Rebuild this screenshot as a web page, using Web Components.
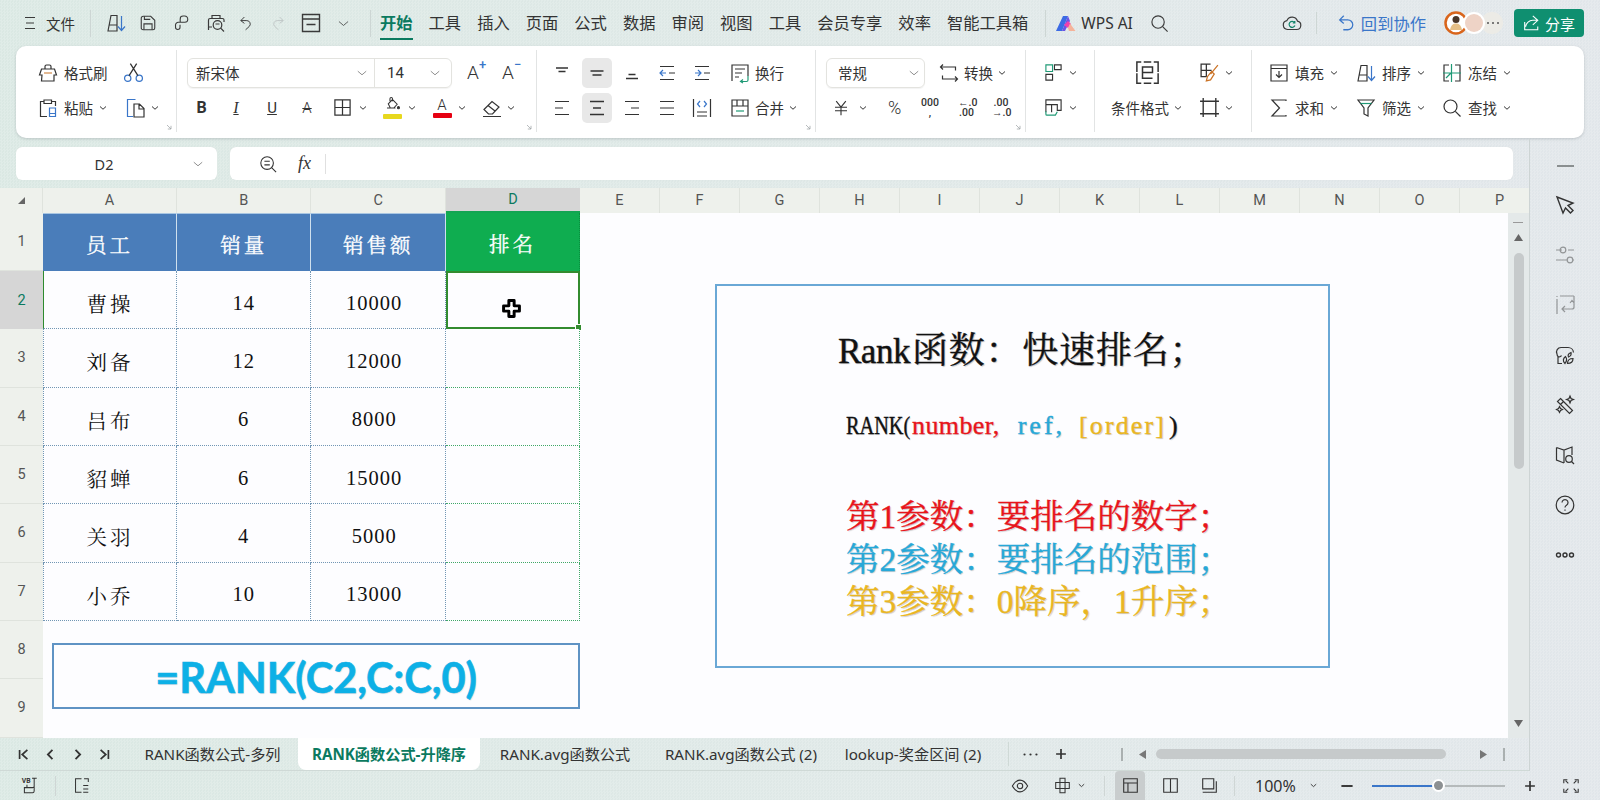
<!DOCTYPE html>
<html lang="zh">
<head>
<meta charset="utf-8">
<title>RANK</title>
<style>
html, body { margin: 0; padding: 0; width: 1600px; height: 800px; overflow: hidden; }
body {
    display: flex;
    flex-direction: column;
    font-family: "Noto Sans", "Noto Sans CJK SC", sans-serif;
    color: #333;
    background:
        repeating-conic-gradient(rgba(255,255,255,.16) 0 25%, transparent 0 50%) 0 0 / 3px 3px,
        linear-gradient(90deg, #dae8e3, #dfe8e7 55%, #e1e6ea);
}
.below { display: flex; height: 633px; flex: none; }
.left-col { width: 1529px; display: flex; flex-direction: column; }
</style>
</head>
<body>
<wps-topbar></wps-topbar>
<wps-ribbon></wps-ribbon>
<div class="below">
    <div class="left-col">
        <wps-formula></wps-formula>
        <wps-sheet></wps-sheet>
        <wps-tabs></wps-tabs>
    </div>
    <wps-rail></wps-rail>
</div>
<wps-status></wps-status>

<script>
// icon shapes, all on a 20x20 box, stroke comes from currentColor
const BLUE = '#3a76c9';
const GREEN = '#1f9a76';
const ICONS = {
    menu: '<path d="M5 4.5h10M6 10h8M5 15.5h10"/>',
    chev: '<path d="M4 7l6 5.5L16 7" stroke-width="2"/>',
    chevthin: '<path d="M3 7l7 6 7-6" stroke-width="1.2"/>',
    sort: `<path d="M2 18 5 2.5h6V18zM3.5 12H11"/><path d="M15.5 3v14M12 13.5l3.5 4 3.5-4" stroke="${BLUE}"/>`,
    save: '<path d="M2.5 4.5a2 2 0 0 1 2-2h8.5l4.5 4.5v8.5a2 2 0 0 1-2 2h-11a2 2 0 0 1-2-2z"/><path d="M6 2.5V6h6.5M5.5 17.5V11h9v6.5"/>',
    paint: '<path d="M8 9V5.5a3.2 3.2 0 0 1 3.2-3.2H13a3.4 3.4 0 0 1 0 6.8H6a3.2 3.2 0 0 0-3.2 3.2v2.5a2.5 2.5 0 0 0 5 0V12"/>',
    preview: '<path d="M6 5.5V2.5h8v3M2.5 17V7a1.5 1.5 0 0 1 1.5-1.5h12.5A1.5 1.5 0 0 1 18 7v2M2.5 14H6"/><circle cx="11.5" cy="12" r="4.3"/><path d="M14.7 15.2l3.3 3.3M9.5 11h4"/>',
    undo: '<path d="M8 2.5 3.5 7l4.5 3.5M3.5 7H11a4.3 4.3 0 0 1 3 7.4L9.5 18.5"/>',
    redo: '<path d="M12 2.5 16.5 7 12 10.5M16.5 7H9a4.3 4.3 0 0 0-3 7.4l4.5 4.1"/>',
    box: '<path d="M1.5 1.5h17v17h-17zM1.5 6h17M5.5 11.5h9" stroke-width="1.4"/>',
    search: '<circle cx="8.5" cy="8.5" r="6.5"/><path d="M13.3 13.3 18.5 18.5"/>',
    cloud: '<path d="M5.5 16.5a4.5 4.5 0 0 1-.6-8.9 5.6 5.6 0 0 1 10.6.6 4.2 4.2 0 0 1-.8 8.3z"/><path d="M12.5 9.5a3 3 0 1 0 .4 3M12.8 8v2h-2" stroke="#12846a"/>',
    backblue: `<path d="M7.5 2 3 6.5 7.5 10.5M3 6.5h9a5.5 5.5 0 0 1 0 11H7" stroke="${BLUE}" stroke-width="1.4"/>`,
    share: '<path d="M12 2l5.5 5-5.5 5M17 7h-5a8 8 0 0 0-8 7M3 9v8.5h14.5V14" stroke-width="1.2"/>',
    scissors: `<circle cx="4.5" cy="15.5" r="3" stroke="${BLUE}"/><circle cx="15.5" cy="15.5" r="3" stroke="${BLUE}"/><path d="M5.8 13 13 1.5M14.2 13 7 1.5"/>`,
    painter: '<path d="M7 6V3.5A1.5 1.5 0 0 1 8.5 2h3A1.5 1.5 0 0 1 13 3.5V6M3.5 6h13l2 6H16v6H3.5l.5-6H1.5z"/><path d="M6 10h8" stroke="#d08a4a"/>',
    paste: `<path d="M5.5 3.5h-3v15H9M14 3.5h3.5V8M6 3.5V2h7.5v3.5H6z"/><path d="M11.5 10h6v8.5h-6zM11.5 15.5h6" stroke="${BLUE}"/>`,
    copy: `<path d="M8 18.5H2.5V1.5h8" stroke="${BLUE}"/><path d="M9 6h5.5L19 10.5V19H9zM14 6v5h5"/>`,
    borders: '<path d="M2 2h16v16H2zM10 2v16M2 10h16" stroke-width="1.3"/>',
    fill: '<path d="M5 8 10 3l5.5 5.5-4 4.5H7.5zM3.5 13h10M7 5V2a1.5 1.5 0 0 1 3 0v3"/><circle cx="17" cy="12.5" r="1.2" fill="currentColor"/>',
    eraser: '<path d="M2 11.5 10 3.5l7 5.5-6.5 7h-4zM6 7.5l7 5.5M1 18.5h18"/>',
    alTop: '<path d="M4 5h12M6.5 8.5h7" stroke-width="1.4"/>',
    alMid: '<path d="M3.5 8h13M5.5 12h9" stroke-width="1.6"/>',
    alBot: '<path d="M6.5 11.5h7M4 15.5h12" stroke-width="1.4"/>',
    indL: `<path d="M3 3.5h14M3 16.5h14M12 10h6"/><path d="M3 10h6M6 7l-3 3 3 3" stroke="${BLUE}"/>`,
    indR: `<path d="M3 3.5h14M3 16.5h14M12 10h6"/><path d="M3 10h6M6 7l3 3-3 3" stroke="${BLUE}"/>`,
    wrap: `<path d="M2 18V2h16v11M5 6h10M5 10h7M5 14h4"/><path d="M18 13v4a1.5 1.5 0 0 1-1.5 1.5H11M13 16.5l-2.5 2 2.5 1.5" stroke="${GREEN}"/>`,
    left: '<path d="M3 3.5h14M3 10h8M3 16.5h14"/>',
    center: '<path d="M3 3.5h14M6 10h8M3 16.5h14" stroke-width="1.5"/>',
    right: '<path d="M3 3.5h14M9 10h8M3 16.5h14"/>',
    just: '<path d="M3 3.5h14M3 10h14M3 16.5h14"/>',
    dist: `<path d="M1.5 1v18M18.5 1v18M5 14h10M5 18h10"/><path d="M8 3 5.5 6 8 9M12 3l2.5 3L12 9" stroke="${BLUE}"/>`,
    merge: `<path d="M2 2h16v16H2zM7 2v6M13 2v6M2 8h16"/><path d="M6 13h8" stroke="${GREEN}"/>`,
    convert: '<path d="M4 1.5l-2.5 2.5L4 6.5M2 4h14.5v3.5M16 18.5l2.5-2.5-2.5-2.5M18 16H3.5v-3.5"/>',
    yen: '<path d="M4 1.5 10 9l6-7.5M2.5 9h15M2.5 13.5h15M10 9v10" stroke-width="1.4"/>',
    table1: `<path d="M2 12h7v6H2zM11 2h7v5h-7z"/><path d="M2 2h7v7H2z" stroke="${GREEN}"/>`,
    table2: `<path d="M2 2h16v11h-4V7H2zM2 7v8M8 7v8"/><path d="M2 14v3a1 1 0 0 0 1 1h9l2-3.5" stroke="${GREEN}"/>`,
    cond: '<path d="M5 1.5H1.5v8M1.5 10.5v8H5M15 1.5h3.5v8M18.5 10.5v8H15M7 1.5h6M7 18.5h6M6 5.5h8V10H6zM6 10v4.5h8"/>',
    cbrush: '<path d="M11 2H2v12h5M2 8h10M7 2v12"/><path d="M18 3 11 11.5M12 9l2.5 2.5L11 17l-4 1 1-4z" stroke="#cb7428"/>',
    crop: '<path d="M4 1v18M16 1v18M1 4h18M1 16h18" stroke-width="1.3"/>',
    fillb: '<path d="M2 2h16v16H2zM2 5.5h16"/><path d="M10 8v6.5M7 11.5l3 3 3-3"/>',
    freeze: `<path d="M7 2H2v16h5M13 2h5v16h-5"/><path d="M9.5 1v18M1 10h18M4 15l5-5" stroke="${GREEN}"/>`,
    sum: '<path d="M17 3V2H3l7.5 8L3 18h14v-1"/>',
    filter: `<path d="M2 2h16l-6 8v8l-4-2v-6z"/><path d="M4.5 5.5h11" stroke="${GREEN}"/>`,
    eye: '<path d="M1.5 10C4 5.5 7 3.5 10 3.5s6 2 8.5 6.5c-2.5 4.5-5.5 6.5-8.5 6.5S4 14.5 1.5 10z"/><circle cx="10" cy="10" r="3"/>',
    layout: '<path d="M7 6.5V1.5h6v5M7 13.5v5h6v-5M7 6.5H2v7h5M13 6.5h5v7h-5M7 6.5h6v7H7z"/>',
    normal: '<path d="M2 2h16v16H2zM2 7h16M7 7v11" stroke-width="1.3"/>',
    page: '<path d="M2 2h16v16H2zM10 2v16" stroke-width="1.3"/>',
    pagebrk: '<path d="M2 2h13v12H2zM18 5v13H2" stroke-width="1.3"/>',
    full: '<path d="M2 7V3h4M18 7V3h-4M2 13v4h4M18 13v4h-4M7 7 4 4M13 7l3-3M7 13l-3 3M13 13l3 3"/>',
    zoomf: '<circle cx="9" cy="9" r="7"/><path d="M14 14l5 5M6 7h6M6 11h6"/>',
    vba: '<path d="M13 1.5h5.5M15.5 1.5v9a2 2 0 0 1-2 2H7V9M7 12.5H4v6h9.5a2 2 0 0 0 2-2v-6"/><text x="1" y="7.5" font-size="8" font-weight="700" font-family="Roboto,sans-serif" fill="currentColor" stroke="none">VB</text>',
    side: '<path d="M10 2H3v16h7M13 2h5v4M12 10h6M12 14h6M12 18h6"/>',
    arrow: '<path d="M2 2 18 8l-5 2.5 5 5-2.5 2.5-5-5L8 18z" stroke-width="1.4"/>',
    sliders: '<path d="M1 5h6M13 5h6M1 15h11M18 15h1"/><circle cx="8" cy="5" r="2.8"/><circle cx="15" cy="15" r="2.8"/>',
    move: '<path d="M2 1v1M2 4v15M5 1h14M19 1v11a2 2 0 0 1-2 2H7M10 11l-3 3 3 3M15 8l2-2.5L19 8"/>',
    pic: '<path d="M7 18.5H3V11.5a3.5 3.5 0 0 1-1-2.5A4.5 4.5 0 0 1 6 2.5h7a5.5 5.5 0 0 1 5.5 5M3 11.5a2.5 2.5 0 0 0 3.5-1"/><path d="M10 18.5c-2.5-2.5-2-5 .5-7 1.5 2 1.5 4.5-.5 7zM12.5 18.5c0-3 2-5 5.5-5 0 3-2 5-5.5 5zM13.5 12c-1-2 0-3.5 2.5-4.5.5 2 0 3.5-2.5 4.5z"/>',
    wand: '<path d="M5.5 3.5 17.5 15.5 14.5 18.5 2.5 6.5zM8.5 6.5l-3 3"/><path d="M15 1l1 2.5L18.5 4.5 16 5.5 15 8l-1-2.5L11.5 4.5 14 3.5zM4.5 11.5l1 2 2 1-2 1-1 2-1-2-2-1 2-1z"/>',
    mapq: '<path d="M1.5 2.5 9 5l8-3v8M9 5v13M9 18l-7.5-3V2.5"/><circle cx="14" cy="14" r="3.3"/><path d="M16.5 16.5 19 19"/>',
    help: '<circle cx="10" cy="10" r="8.8"/><path d="M7 7.5a3 3 0 1 1 4.5 2.7c-1 .6-1.5 1-1.5 2.3M10 14.5v1.2"/>',
    more: '<circle cx="3.5" cy="10" r="2"/><circle cx="10" cy="10" r="2"/><circle cx="16.5" cy="10" r="2"/>',
    dots: '<g fill="currentColor" stroke="none"><circle cx="3" cy="10" r="1.3"/><circle cx="10" cy="10" r="1.3"/><circle cx="17" cy="10" r="1.3"/></g>',
    first: '<path d="M4 3v14M16 3 8 10l8 7" stroke-width="2.6"/>',
    prev: '<path d="M13 3 6 10l7 7" stroke-width="2.8"/>',
    next: '<path d="M7 3l7 7-7 7" stroke-width="2.8"/>',
    last: '<path d="M16 3v14M4 3l8 7-8 7" stroke-width="2.6"/>',
    plus: '<path d="M10 3v14M3 10h14" stroke-width="2.4"/>',
    minus: '<path d="M3 10h14" stroke-width="2.4"/>',
    corner: '<path d="M5 5l10 10M15 7v8H7" stroke-width="1.8"/>'
};

class WpsIco extends HTMLElement {
    constructor() {
        super();
        const shadow = this.attachShadow({ mode: 'open' });
        const size = this.getAttribute('size') || 20;
        const sw = this.getAttribute('sw') || 1.2;
        shadow.innerHTML = `
            <style>
                :host { display: inline-flex; flex: none; width: ${size}px; height: ${size}px; }
                svg { width: 100%; height: 100%; display: block; overflow: visible; }
            </style>
            <svg viewBox="0 0 20 20" fill="none" stroke="currentColor" stroke-width="${sw}">${ICONS[this.getAttribute('name')] || ''}</svg>`;
    }
}
customElements.define('wps-ico', WpsIco);

// icon + label + optional small arrow
class WpsBtn extends HTMLElement {
    constructor() {
        super();
        const shadow = this.attachShadow({ mode: 'open' });
        const icon = this.getAttribute('icon');
        const label = this.getAttribute('label');
        shadow.innerHTML = `
            <style>
                :host { display: inline-flex; align-items: center; flex: none; gap: 6px; font-size: 14.5px; color: #333; line-height: 20px; white-space: nowrap; }
                .c { margin-left: -1px; color: #333; }
            </style>
            ${icon ? `<wps-ico name="${icon}"></wps-ico>` : ''}
            ${label ? `<span>${label}</span>` : ''}
            ${this.hasAttribute('chev') ? '<wps-ico class="c" name="chev" size="10"></wps-ico>' : ''}`;
    }
}
customElements.define('wps-btn', WpsBtn);

class WpsTopbar extends HTMLElement {
    constructor() {
        super();
        const shadow = this.attachShadow({ mode: 'open' });
        shadow.innerHTML = `
            <style>
                :host { display: flex; align-items: center; height: 46px; flex: none; font-size: 16.3px; color: #333; white-space: nowrap; }
                .sep { width: 1px; height: 27px; background: #cdd6d4; flex: none; }
                wps-ico { color: #3a3a3a; }
                .nav { display: flex; gap: 16px; margin-left: 9px; }
                .nav span { line-height: 24px; }
                .on { color: #0b7a5f; font-weight: 700; position: relative; }
                .on::after { content: ""; position: absolute; left: 0; right: 0; bottom: -5px; height: 2.5px; background: #0b7a5f; }
                .share { display: flex; align-items: center; gap: 5px; margin: 0 16px 0 auto; width: 70px; height: 28px; box-sizing: border-box; padding-left: 8px; background: #0f8f70; color: #fff; border-radius: 4px; font-size: 15px; flex: none; }
            </style>
            <wps-ico name="menu" size="20" style="margin-left:20px"></wps-ico>
            <span style="margin-left:6px;font-size:14.5px">文件</span>
            <div class="sep" style="margin-left:15px"></div>
            <wps-ico name="sort" style="margin-left:15px"></wps-ico>
            <wps-ico name="save" size="18" style="margin-left:13px"></wps-ico>
            <wps-ico name="paint" size="18" style="margin-left:16px"></wps-ico>
            <wps-ico name="preview" style="margin-left:15px"></wps-ico>
            <wps-ico name="undo" size="16" style="margin-left:12px"></wps-ico>
            <wps-ico name="redo" size="16" style="margin-left:16px;color:#bfc6c5"></wps-ico>
            <wps-ico name="box" size="20" style="margin-left:15px"></wps-ico>
            <wps-ico name="chevthin" size="13" style="margin-left:16px"></wps-ico>
            <div class="sep" style="margin-left:20px"></div>
            <div class="nav">
                <span class="on">开始</span><span>工具</span><span>插入</span><span>页面</span><span>公式</span><span>数据</span><span>审阅</span><span>视图</span><span>工具</span><span>会员专享</span><span>效率</span><span>智能工具箱</span>
            </div>
            <div class="sep" style="margin-left:17px"></div>
            <svg width="20" height="15" viewBox="0 0 20 15" style="margin-left:10px;flex:none">
                <path d="M0 15 7 0h5L6 15z" fill="#3c6be4"/>
                <path d="M6 15 12 0l2 5-5 10z" fill="#6a55e6"/>
                <path d="M8 9l4-4 3 3-3 4z" fill="#f03fae"/>
                <path d="M14 7.5 19.5 15H13l-1-3z" fill="#f5b39a"/>
            </svg>
            <span style="margin-left:5px;font-size:15.5px">WPS AI</span>
            <wps-ico name="search" size="19" style="margin-left:17px"></wps-ico>
            <wps-ico name="cloud" size="20" style="margin-left:113px"></wps-ico>
            <div class="sep" style="margin-left:14px;height:22px"></div>
            <wps-ico name="backblue" size="18" style="margin-left:20px"></wps-ico>
            <span style="margin-left:6px;color:#3a76c9">回到协作</span>
            <svg width="62" height="28" viewBox="0 0 62 28" style="flex:none;margin-left:18px">
                <circle cx="48" cy="14" r="11" fill="#ecebe6"/>
                <circle cx="12" cy="14" r="10.5" fill="#fff" stroke="#d9651c" stroke-width="2.5"/>
                <circle cx="12" cy="10.5" r="3.5" fill="#4a3528"/>
                <path d="M6 21c1-5 3-6.5 6-6.5s5 1.5 6 6.5z" fill="#e6bf87"/>
                <circle cx="30" cy="14" r="11" fill="#fff"/>
                <circle cx="30" cy="14" r="9" fill="#eed3c6"/>
                <g fill="#555"><circle cx="44" cy="14" r="1"/><circle cx="49" cy="14" r="1"/><circle cx="54" cy="14" r="1"/></g>
            </svg>
            <div class="share"><wps-ico name="share" size="18" style="color:#fff"></wps-ico><span>分享</span></div>`;
    }
}
customElements.define('wps-topbar', WpsTopbar);

class WpsRibbon extends HTMLElement {
    constructor() {
        super();
        const shadow = this.attachShadow({ mode: 'open' });
        const corner = '<wps-ico class="cn" name="corner" size="8"></wps-ico>';
        const ch = (ml) => `<wps-ico name="chev" size="10" style="margin-left:${ml}px"></wps-ico>`;
        shadow.innerHTML = `
            <style>
                :host { display: flex; flex: none; margin-left: 16px; width: 1568px; height: 92px; box-sizing: border-box; padding-top: 4px; background: #fff; border-radius: 10px; box-shadow: 0 1px 3px rgba(120,130,135,.35); color: #333; font-size: 14.5px; }
                .g { position: relative; height: 82px; padding-top: 5px; border-right: 1px solid #e2e4e4; box-sizing: border-box; flex: none; }
                .g:last-child { border-right: 0; }
                .row { display: flex; align-items: center; height: 35px; white-space: nowrap; }
                .cn { position: absolute; right: 3px; bottom: 1px; color: #9aa0a3; }
                .dd { display: flex; align-items: center; height: 30px; box-sizing: border-box; border: 1px solid #e3e3df; border-radius: 6px; flex: none; box-shadow: 0 1px 1px rgba(0,0,0,.05); }
                .f { width: 20px; height: 24px; display: flex; align-items: center; justify-content: center; flex: none; }
                .al { width: 30px; height: 30px; display: flex; align-items: center; justify-content: center; flex: none; border-radius: 5px; margin-left: 5px; }
                .al.on { background: #e8e8e8; }
                .bar { display: flex; flex-direction: column; align-items: center; width: 20px; flex: none; line-height: 15px; }
                .bar i { display: block; width: 19px; height: 5px; border-radius: 1px; }
                .num { font-family: "Roboto", sans-serif; font-size: 10.5px; line-height: 10px; text-align: center; flex: none; font-weight: 500; white-space: pre; }
            </style>
            <div class="g" style="width:161px">
                <div class="row" style="padding-left:22px"><wps-btn icon="painter" label="格式刷"></wps-btn><wps-ico name="scissors" size="21" style="margin-left:15px"></wps-ico></div>
                <div class="row" style="padding-left:22px"><wps-btn icon="paste" label="粘贴" chev></wps-btn><wps-btn icon="copy" chev style="margin-left:17px"></wps-btn></div>
                ${corner}
            </div>
            <div class="g" style="width:360px">
                <div class="row" style="padding-left:10px">
                    <div class="dd" style="width:265px">
                        <span style="margin-left:8px;width:160px">新宋体</span><wps-ico name="chevthin" size="12" style="color:#666"></wps-ico>
                        <span style="margin-left:6px;width:1px;height:28px;background:#e3e3df"></span>
                        <span style="margin-left:12px;width:42px;font-family:Roboto,sans-serif;font-size:15px">14</span><wps-ico name="chevthin" size="12" style="color:#666"></wps-ico>
                    </div>
                    <span style="margin-left:15px;font:300 19px Roboto,sans-serif;width:19px;position:relative">A<b style="position:absolute;left:12px;top:-4px;font-size:13px;color:#3a76c9;font-weight:500">+</b></span>
                    <span style="margin-left:16px;font:300 19px Roboto,sans-serif;width:19px;position:relative">A<b style="position:absolute;left:12px;top:-4px;font-size:13px;color:#3a76c9;font-weight:500">−</b></span>
                </div>
                <div class="row" style="padding-left:14.5px">
                    <span class="f" style="font:700 16px Roboto,sans-serif">B</span>
                    <span class="f" style="margin-left:14.5px;font:italic 16px 'Liberation Serif',serif;text-decoration:underline">I</span>
                    <span class="f" style="margin-left:16px;font:15px Roboto,sans-serif;text-decoration:underline">U</span>
                    <span class="f" style="margin-left:15px;font:300 15px Roboto,sans-serif;text-decoration:line-through">A</span>
                    <wps-ico name="borders" size="19" style="margin-left:16px"></wps-ico>${ch(6)}
                    <span class="bar" style="margin-left:14px"><wps-ico name="fill" size="17"></wps-ico><i style="background:#e7d81e"></i></span>${ch(5)}
                    <span class="bar" style="margin-left:15px"><span style="font:300 15px Roboto,sans-serif;line-height:16px">A</span><i style="background:#e60012"></i></span>${ch(5)}
                    <wps-ico name="eraser" size="20" style="margin-left:15px"></wps-ico>${ch(4)}
                </div>
                ${corner}
            </div>
            <div class="g" style="width:279px">
                <div class="row" style="padding-left:5px">
                    <span class="al"><wps-ico name="alTop"></wps-ico></span><span class="al on"><wps-ico name="alMid"></wps-ico></span><span class="al"><wps-ico name="alBot"></wps-ico></span><span class="al"><wps-ico name="indL"></wps-ico></span><span class="al"><wps-ico name="indR"></wps-ico></span>
                    <wps-btn icon="wrap" label="换行" style="margin-left:13px;gap:5px"></wps-btn>
                </div>
                <div class="row" style="padding-left:5px">
                    <span class="al"><wps-ico name="left"></wps-ico></span><span class="al on"><wps-ico name="center"></wps-ico></span><span class="al"><wps-ico name="right"></wps-ico></span><span class="al"><wps-ico name="just"></wps-ico></span><span class="al"><wps-ico name="dist"></wps-ico></span>
                    <wps-btn icon="merge" label="合并" chev style="margin-left:13px;gap:5px"></wps-btn>
                </div>
                ${corner}
            </div>
            <div class="g" style="width:210px">
                <div class="row" style="padding-left:10px">
                    <div class="dd" style="width:99px"><span style="margin-left:11px;width:70px">常规</span><wps-ico name="chevthin" size="12" style="color:#666"></wps-ico></div>
                    <wps-btn icon="convert" label="转换" chev style="margin-left:14px;gap:5px"></wps-btn>
                </div>
                <div class="row" style="padding-left:17px">
                    <wps-ico name="yen" size="16"></wps-ico>${ch(9)}
                    <span style="margin-left:20px;font:300 18px Roboto,sans-serif;width:15px">%</span>
                    <span class="num" style="margin-left:18px;width:18px">000<br>,</span>
                    <span class="num" style="margin-left:19px;width:17px">←.0<br>.00</span>
                    <span class="num" style="margin-left:17px;width:18px">.00<br>→.0</span>
                </div>
                ${corner}
            </div>
            <div class="g" style="width:69px">
                <div class="row" style="padding-left:18px"><wps-ico name="table1" size="19"></wps-ico>${ch(5)}</div>
                <div class="row" style="padding-left:18px"><wps-ico name="table2" size="19"></wps-ico>${ch(5)}</div>
            </div>
            <div class="g" style="width:157px">
                <div class="row" style="padding-left:40px"><wps-ico name="cond" size="25"></wps-ico><wps-ico name="cbrush" size="21" style="margin-left:39px"></wps-ico>${ch(4)}</div>
                <div class="row" style="padding-left:16px"><span style="width:60px">条件格式</span>${ch(2)}<wps-ico name="crop" size="21" style="margin-left:16px"></wps-ico>${ch(4)}</div>
            </div>
            <div class="g" style="width:332px">
                <div class="row" style="padding-left:17px"><wps-btn icon="fillb" label="填充" chev></wps-btn><wps-btn icon="sort" label="排序" chev style="margin-left:17px"></wps-btn><wps-btn icon="freeze" label="冻结" chev style="margin-left:16px"></wps-btn></div>
                <div class="row" style="padding-left:17px"><wps-btn icon="sum" label="求和" chev></wps-btn><wps-btn icon="filter" label="筛选" chev style="margin-left:17px"></wps-btn><wps-btn icon="search" label="查找" chev style="margin-left:16px"></wps-btn></div>
            </div>`;
    }
}
customElements.define('wps-ribbon', WpsRibbon);

class WpsFormula extends HTMLElement {
    constructor() {
        super();
        const shadow = this.attachShadow({ mode: 'open' });
        shadow.innerHTML = `
            <style>
                :host { display: flex; flex: none; height: 33px; margin: 9px 0 0 16px; gap: 13px; color: #333; }
                .name, .input { background: #fff; border-radius: 6px; display: flex; align-items: center; box-shadow: 0 0 1px rgba(0,0,0,.1); }
                .name { width: 201px; font-size: 14.5px; }
                .name span { width: 176px; text-align: center; }
                .input { width: 1283px; }
            </style>
            <div class="name"><span>D2</span><wps-ico name="chevthin" size="12" style="color:#666"></wps-ico></div>
            <div class="input">
                <wps-ico name="zoomf" size="18" style="margin-left:29px"></wps-ico>
                <span style="margin-left:21px;font:italic 18px 'Liberation Serif',serif">fx</span>
                <span style="margin-left:14px;width:1px;height:20px;background:#e0e0e0"></span>
            </div>`;
    }
}
customElements.define('wps-formula', WpsFormula);

const STAFF = [
    ['曹操', '14', '10000'], ['刘备', '12', '12000'], ['吕布', '6', '8000'],
    ['貂蝉', '6', '15000'], ['关羽', '4', '5000'], ['小乔', '10', '13000']
];

class WpsSheet extends HTMLElement {
    constructor() {
        super();
        const shadow = this.attachShadow({ mode: 'open' });
        const cols = 'ABCDEFGHIJKLMNOP'.split('');
        let cells = '<div class="ch"><svg width="9" height="9" viewBox="0 0 9 9"><path d="M8 1v7H1z" fill="#666"/></svg></div>';
        cols.forEach((c) => { cells += `<div class="ch${c === 'D' ? ' sel' : ''}">${c}</div>`; });
        for (let r = 1; r <= 9; r++) {
            cells += `<div class="rh${r === 2 ? ' sel' : ''}">${r}</div>`;
            cols.forEach((c, i) => {
                if (i > 3) { cells += '<div class="c"></div>'; return; }
                if (r === 1) {
                    cells += `<div class="c h${i === 3 ? ' g' : ''}">${['员工', '销量', '销售额', '排名'][i]}</div>`;
                } else if (r <= 7) {
                    const v = i < 3 ? STAFF[r - 2][i] : '';
                    const cl = [i === 0 ? 'cjk first' : '', i === 2 ? 'amt' : '', i === 3 ? 'g' : '',
                        i === 0 && r === 2 ? 'active-row' : '', i === 3 && r === 2 ? 'cur' : ''].join(' ');
                    cells += `<div class="c d ${cl}">${v}</div>`;
                } else {
                    cells += '<div class="c"></div>';
                }
            });
        }
        shadow.innerHTML = `
            <style>
                :host { display: block; flex: none; position: relative; width: 1529px; height: 550px; margin-top: 8px; overflow: hidden; }
                .grid { display: grid; grid-template-columns: 43px 134px 134.3px 134.7px 134px repeat(12, 80px); grid-template-rows: 25px 58px repeat(8, 58.33px); width: 1600px; }
                .ch, .rh { background: #eef1ec; color: #555; display: flex; align-items: center; justify-content: center; font: 14.5px Roboto, sans-serif; box-sizing: border-box; }
                .ch { border-right: 1px solid #dfe3dd; }
                .ch.sel { background: #d6d6d6; color: #0b7a5f; border-bottom: 2px solid #12a552; border-right: 0; }
                .rh { border-bottom: 1px solid #dfe3dd; }
                .rh.sel { background: #d6d6d6; color: #0b7a5f; border-bottom: 0; }
                .c { background: #fdfdff; box-sizing: border-box; display: flex; align-items: center; justify-content: center; font: 20.5px "Liberation Serif", "Noto Serif CJK SC", "Noto Sans CJK SC", serif; color: #111; letter-spacing: 1px; padding-top: 7px; }
                .h { background: #4a7dba; color: #fff; border-right: 1px solid #cfe0ee; border-top: 1px solid #a9c6e2; letter-spacing: 3px; padding-top: 2px; -webkit-text-stroke: .3px #fff; }
                .h.g { background: #0fad50; border-right: 1px dotted #0a8f40; border-top: 0; }
                .d { border-right: 1px dotted #7196b4; border-bottom: 1px dotted #7196b4; }
                .d.cjk { letter-spacing: 3px; }
                .d.amt { padding-right: 8px; }
                .d.first { border-left: 1px dotted #7196b4; }
                .d.active-row { border-left: 1px solid #2e8b2e; }
                .d.g { border-right: 1px dotted #3fa866; border-bottom: 1px dotted #3fa866; position: relative; }
                .d.cur { border: 2px solid #338b2f; }
                .cur::after { content: ""; position: absolute; right: -4px; bottom: -4px; width: 5px; height: 5px; background: #338b2f; border: 1px solid #fff; }
                .cursor { position: absolute; left: 502px; top: 111px; width: 19px; height: 19px; }
                .vbar { position: absolute; left: 1508px; top: 25px; bottom: 0; width: 21px; background: #e4e9e9; }
                .vbar i { position: absolute; left: 6px; top: 40px; width: 10px; height: 216px; background: #c6cacb; border-radius: 5px; }
                .vbar b { position: absolute; left: 5px; top: 9px; width: 10px; height: 1px; background: #999; }
                .vbar svg { position: absolute; left: 6px; }
            </style>
            <div class="grid">${cells}</div>
            <svg class="cursor" viewBox="0 0 18 18"><path d="M6.5 1.5h5v5h5v5h-5v5h-5v-5h-5v-5h5z" fill="#fff" stroke="#000" stroke-width="2.8" stroke-linejoin="round"/></svg>
            <div class="vbar"><b></b>
                <svg width="9" height="7" viewBox="0 0 9 7" style="top:21px"><path d="M4.5 0 9 7H0z" fill="#666"/></svg>
                <i></i>
                <svg width="9" height="7" viewBox="0 0 9 7" style="top:507px"><path d="M0 0h9L4.5 7z" fill="#666"/></svg>
            </div>
            <rank-note></rank-note>
            <rank-formula></rank-formula>`;
    }
}
customElements.define('wps-sheet', WpsSheet);

// text box drawn over the cells
class RankNote extends HTMLElement {
    constructor() {
        super();
        const shadow = this.attachShadow({ mode: 'open' });
        shadow.innerHTML = `
            <style>
                :host { position: absolute; left: 715px; top: 96px; width: 615px; height: 384px; box-sizing: border-box; background: #fdfdff; border: 2px solid #6aa8d6; font-family: "Liberation Serif", "Noto Serif CJK SC", "Noto Sans CJK SC", serif; display: flex; flex-direction: column; white-space: nowrap; -webkit-text-stroke: .35px; }
                .t { margin: 40px 0 0 121px; font-size: 36px; line-height: 50px; color: #111; letter-spacing: .8px; text-shadow: 1px 1px 1px rgba(0,0,0,.25); }
                .t em { font-style: normal; font-size: 35px; letter-spacing: -.5px; margin-right: 2px; }
                .f { display: flex; margin: 32px 0 0 129px; font-size: 26px; line-height: 34px; color: #111; text-shadow: 1px 1px 1px rgba(0,0,0,.2); }
                .f .squeeze { display: inline-block; width: 62px; transform: scaleX(.78); transform-origin: 0 50%; }
                .p { margin: 0 0 0 129px; font-size: 33.5px; line-height: 42.5px; text-shadow: 1px 1px 1px rgba(0,0,0,.2); }
                .r { color: #e8151b; } .b { color: #27a8d8; } .y { color: #eab622; }
            </style>
            <div class="t"><em>Rank</em>函数：快速排名；</div>
            <div class="f">
                <span class="squeeze">RANK(</span>
                <span class="r" style="letter-spacing:.4px;margin-left:4px">number,</span>
                <span class="b" style="letter-spacing:3px;margin-left:18px">ref,</span>
                <span class="y" style="letter-spacing:2.1px;margin-left:14px">[order]</span>
                <span style="margin-left:3px">)</span>
            </div>
            <div class="p r" style="margin-top:53px">第1参数：要排名的数字；</div>
            <div class="p b">第2参数：要排名的范围；</div>
            <div class="p y">第3参数：0降序，1升序；</div>`;
    }
}
customElements.define('rank-note', RankNote);

class RankFormula extends HTMLElement {
    constructor() {
        super();
        const shadow = this.attachShadow({ mode: 'open' });
        shadow.innerHTML = `
            <style>
                :host { position: absolute; left: 52px; top: 455px; width: 528px; height: 66px; box-sizing: border-box; padding-top: 2px; background: #fdfdff; border: 2px solid #5f93c4; display: flex; align-items: center; justify-content: center; color: #0db0e6; font: 700 41.5px Lato, sans-serif; -webkit-text-stroke: .6px; text-shadow: 1px 1px 1px rgba(0,0,0,.12); }
            </style>
            <span>=RANK(C2,C:C,0)</span>`;
    }
}
customElements.define('rank-formula', RankFormula);

class WpsTabs extends HTMLElement {
    constructor() {
        super();
        const shadow = this.attachShadow({ mode: 'open' });
        shadow.innerHTML = `
            <style>
                :host { display: flex; align-items: center; flex: none; height: 33px; font-size: 15.2px; color: #333; white-space: nowrap; border-bottom: 1px solid #cfd9d6; box-sizing: border-box; }
                .nav { display: flex; gap: 14px; padding-left: 17px; width: 109px; box-sizing: border-box; flex: none; }
                .tab { height: 32px; padding-bottom: 3px; box-sizing: border-box; display: flex; align-items: center; justify-content: center; flex: none; }
                .on { color: #0b7a5f; font-weight: 700; background: #fff; border-radius: 0 0 8px 8px; }
                .sep { width: 1px; height: 24px; background: #cfd9d6; flex: none; }
                .thumb { width: 290px; height: 10px; border-radius: 5px; background: #c6cacb; margin-left: 10px; flex: none; }
            </style>
            <div class="nav">
                <wps-ico name="first" size="13"></wps-ico><wps-ico name="prev" size="13"></wps-ico><wps-ico name="next" size="13"></wps-ico><wps-ico name="last" size="13"></wps-ico>
            </div>
            <div class="tab" style="margin-left:18px;width:171px">RANK函数公式-多列</div>
            <div class="tab on" style="width:182px">RANK函数公式-升降序</div>
            <div class="tab" style="width:170px">RANK.avg函数公式</div>
            <div class="tab" style="width:182px">RANK.avg函数公式 (2)</div>
            <div class="tab" style="width:162px">lookup-奖金区间 (2)</div>
            <div class="sep" style="margin-left:14px"></div>
            <wps-ico name="dots" size="17" style="margin-left:13px"></wps-ico>
            <wps-ico name="plus" size="14" style="margin-left:15px"></wps-ico>
            <span style="margin-left:53px;width:2px;height:13px;background:#aab0b0;flex:none"></span>
            <svg width="7" height="9" viewBox="0 0 7 9" style="margin-left:16px;flex:none"><path d="M7 0v9L0 4.5z" fill="#777"/></svg>
            <div class="thumb"></div>
            <svg width="7" height="9" viewBox="0 0 7 9" style="margin-left:34px;flex:none"><path d="M0 0v9l7-4.5z" fill="#777"/></svg>
            <span style="margin-left:16px;width:2px;height:13px;background:#aab0b0;flex:none"></span>`;
    }
}
customElements.define('wps-tabs', WpsTabs);

class WpsRail extends HTMLElement {
    constructor() {
        super();
        const shadow = this.attachShadow({ mode: 'open' });
        const items = [['arrow', 1], ['sliders', .45], ['move', .45], ['pic', 1], ['wand', 1], ['mapq', 1], ['help', 1]];
        shadow.innerHTML = `
            <style>
                :host { display: flex; flex-direction: column; align-items: center; flex: 1; border-left: 1px solid #cdd4d4; box-sizing: border-box; color: #333; padding-top: 27px; }
                .dash { width: 17px; height: 2px; background: #8a8f90; flex: none; }
                .dots { margin-top: 30px; }
            </style>
            <div class="dash"></div>
            ${items.map(([n, o], i) => `<wps-ico name="${n}" style="opacity:${o};margin-top:${i === 0 ? 28 : 30}px"></wps-ico>`).join('')}
            <wps-ico class="dots" name="more" size="20" sw="1.4"></wps-ico>`;
    }
}
customElements.define('wps-rail', WpsRail);

class WpsStatus extends HTMLElement {
    constructor() {
        super();
        const shadow = this.attachShadow({ mode: 'open' });
        shadow.innerHTML = `
            <style>
                :host { display: flex; align-items: center; flex: none; height: 29px; color: #333; white-space: nowrap; }
                .sep { width: 1px; height: 20px; background: #cfd6d5; flex: none; }
                .on { width: 30px; height: 29px; background: #c9cdce; border-radius: 4px 4px 0 0; display: flex; align-items: center; justify-content: center; flex: none; margin-left: 10px; }
                .slider { position: relative; width: 133px; height: 2px; background: #b5babb; margin-left: 17px; flex: none; }
                .slider i { position: absolute; left: 0; top: 0; width: 61px; height: 2px; background: #3a76c9; }
                .slider b { position: absolute; left: 60px; top: -6px; width: 9px; height: 9px; border-radius: 50%; background: #8c9092; border: 2px solid #fff; }
            </style>
            <wps-ico name="vba" size="17" style="margin-left:21px"></wps-ico>
            <div class="sep" style="margin-left:17px"></div>
            <wps-ico name="side" size="17" style="margin-left:17px"></wps-ico>
            <wps-ico name="eye" size="18" style="margin-left:921px"></wps-ico>
            <wps-ico name="layout" size="17" style="margin-left:25px"></wps-ico>
            <wps-ico name="chev" size="9" style="margin-left:6px"></wps-ico>
            <div class="sep" style="margin-left:18px"></div>
            <div class="on"><wps-ico name="normal" size="17"></wps-ico></div>
            <wps-ico name="page" size="17" style="margin-left:17px"></wps-ico>
            <wps-ico name="pagebrk" size="17" style="margin-left:22px"></wps-ico>
            <div class="sep" style="margin-left:16px"></div>
            <span style="margin-left:20px;font-size:16px;width:40px">100%</span>
            <wps-ico name="chev" size="9" style="margin-left:14px"></wps-ico>
            <wps-ico name="minus" size="16" style="margin-left:21px"></wps-ico>
            <div class="slider"><i></i><b></b></div>
            <wps-ico name="plus" size="14" style="margin-left:18px"></wps-ico>
            <wps-ico name="full" size="18" style="margin-left:25px"></wps-ico>`;
    }
}
customElements.define('wps-status', WpsStatus);
</script>
</body>
</html>
